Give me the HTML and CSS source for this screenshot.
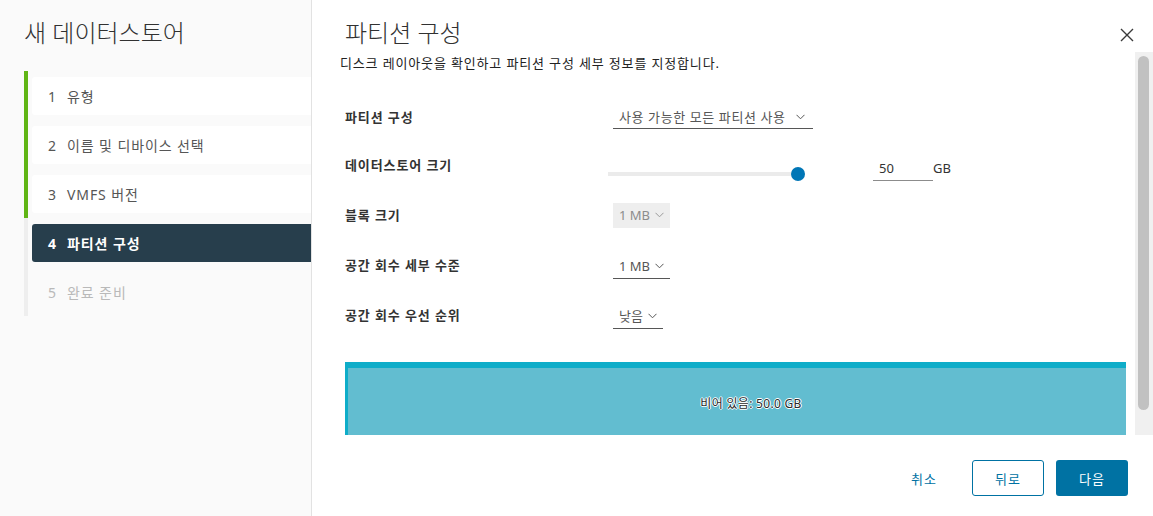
FILE: index.html
```html
<!DOCTYPE html>
<html lang="ko">
<head>
    <meta charset="UTF-8">
    <meta name="viewport" content="width=device-width, initial-scale=1.0">
    <title>새 데이터스토어</title>
    <link rel="stylesheet" href="styles.css">
</head>
<body>
    <aside class="sidebar">
        <h2 class="wizard-title">새 데이터스토어</h2>
        <ul class="steps">
            <li class="step done"><div class="step-box"><span class="num">1</span>유형</div></li>
            <li class="step done"><div class="step-box"><span class="num">2</span>이름 및 디바이스 선택</div></li>
            <li class="step done"><div class="step-box"><span class="num">3</span>VMFS 버전</div></li>
            <li class="step active"><div class="step-box"><span class="num">4</span>파티션 구성</div></li>
            <li class="step todo"><div class="step-box"><span class="num">5</span>완료 준비</div></li>
        </ul>
    </aside>

    <main class="main">
        <header class="header">
            <h1 class="page-title">파티션 구성</h1>
            <button class="close" aria-label="닫기">
                <svg width="14" height="14" viewBox="0 0 14 14"><path d="M1 1 L13 13 M13 1 L1 13" stroke="#3a3a3a" stroke-width="1.4" fill="none"/></svg>
            </button>
        </header>

        <div class="body">
            <div class="content">
                <p class="desc">디스크 레이아웃을 확인하고 파티션 구성 세부 정보를 지정합니다.</p>

                <div class="form">
                    <div class="form-row first">
                        <label>파티션 구성</label>
                        <div class="control">
                            <div class="select wide">사용 가능한 모든 파티션 사용<svg class="chev" width="9" height="6" viewBox="0 0 9 6"><path d="M0.5 0.8 L4.5 4.8 L8.5 0.8" stroke="#565656" fill="none"/></svg></div>
                        </div>
                    </div>
                    <div class="form-row">
                        <label>데이터스토어 크기</label>
                        <div class="control">
                            <div class="slider"><div class="track"></div><div class="thumb"></div></div>
                            <div class="size-input">50</div>
                            <span class="unit">GB</span>
                        </div>
                    </div>
                    <div class="form-row">
                        <label>블록 크기</label>
                        <div class="control">
                            <div class="select disabled">1 MB<svg class="chev" width="9" height="6" viewBox="0 0 9 6"><path d="M0.5 0.8 L4.5 4.8 L8.5 0.8" stroke="#9a9a9a" fill="none"/></svg></div>
                        </div>
                    </div>
                    <div class="form-row">
                        <label>공간 회수 세부 수준</label>
                        <div class="control">
                            <div class="select">1 MB<svg class="chev" width="9" height="6" viewBox="0 0 9 6"><path d="M0.5 0.8 L4.5 4.8 L8.5 0.8" stroke="#565656" fill="none"/></svg></div>
                        </div>
                    </div>
                    <div class="form-row">
                        <label>공간 회수 우선 순위</label>
                        <div class="control">
                            <div class="select">낮음<svg class="chev" width="9" height="6" viewBox="0 0 9 6"><path d="M0.5 0.8 L4.5 4.8 L8.5 0.8" stroke="#565656" fill="none"/></svg></div>
                        </div>
                    </div>
                </div>

                <div class="partition">
                    <span class="partition-label">비어 있음: 50.0 GB</span>
                </div>
            </div>
            <div class="scrollbar"><div class="scroll-thumb"></div></div>
        </div>

        <footer class="footer">
            <button class="btn btn-link">취소</button>
            <button class="btn btn-outline">뒤로</button>
            <button class="btn btn-primary">다음</button>
        </footer>
    </main>
</body>
</html>
```

FILE: styles.css
```css
/* Pagina */
body {
    margin: 0;
    height: 516px;
    display: flex;
    overflow: hidden;
    font-family: 'Noto Sans', 'Noto Sans CJK KR', sans-serif;
    color: #333;
    background: white;
}

/* Barra laterale */
.sidebar {
    width: 287px;
    padding-left: 24px;
    background: #fafafa;
    border-right: 1px solid #e2e2e2;
}

.wizard-title {
    margin: 17px 0 0;
    font-size: 24px;
    line-height: 32px;
    font-weight: 300;
    color: #313131;
}

.steps {
    list-style: none;
    margin: 22px 0 0;
    padding: 0;
}

.step {
    border-left: 4px solid #eeeeee;
    padding: 6px 0 5px 4px;
}

.step.done {
    border-left-color: #60b515;
}

.step-box {
    height: 38px;
    display: flex;
    align-items: center;
    padding-left: 16px;
    font-size: 14px;
    letter-spacing: 0.9px;
    color: #565656;
    border-radius: 3px 0 0 3px;
}

.step-box .num {
    width: 19px;
}

.step.done .step-box {
    background: white;
}

.step.active .step-box {
    background: #273e4c;
    color: white;
    font-weight: 700;
}

.step.todo .step-box {
    color: #b9b9b9;
}

/* Pannello principale */
.main {
    flex: 1;
    display: flex;
    flex-direction: column;
}

.header {
    height: 52px;
    display: flex;
    justify-content: space-between;
    align-items: flex-start;
}

.page-title {
    margin: 17px 0 0 33px;
    font-size: 24px;
    line-height: 32px;
    font-weight: 300;
    color: #313131;
}

.close {
    margin: 28px 19px 0 0;
    padding: 0;
    border: none;
    background: none;
    width: 14px;
    height: 14px;
    line-height: 0;
}

.body {
    height: 383px;
    display: flex;
    overflow: hidden;
}

.content {
    flex: 1;
    padding: 2px 9px 0 33px;
}

.desc {
    margin: 0 0 0 -5px;
    font-size: 13px;
    line-height: 18px;
    letter-spacing: 0.85px;
    color: #222;
}

/* Form */
.form {
    margin-top: 17px;
}

.form-row {
    display: flex;
    align-items: center;
    height: 50px;
}

.form-row label {
    width: 268px;
    font-size: 13px;
    font-weight: 700;
    letter-spacing: 0.9px;
    color: #333;
}

.form-row.first label {
    margin-top: 4px;
}

.control {
    display: flex;
    align-items: center;
}

.select {
    height: 24px;
    display: flex;
    align-items: center;
    margin-top: 4px;
    padding: 0 6px 0 6px;
    border-bottom: 1px solid #565656;
    font-size: 13px;
    white-space: nowrap;
    color: #565656;
}

.select.wide {
    box-sizing: border-box;
    width: 200px;
    justify-content: space-between;
    margin-top: 6px;
    padding-right: 8px;
    letter-spacing: 0.6px;
}

.select.disabled {
    background: #eeeeee;
    border-bottom-color: #eeeeee;
    color: #8c8c8c;
    margin-top: 2px;
}

.chev {
    margin-left: 5px;
    flex-shrink: 0;
}

.slider {
    position: relative;
    width: 197px;
    height: 14px;
    margin: 20px 0 0 -5px;
}

.track {
    position: absolute;
    left: 0;
    right: 7px;
    top: 5px;
    height: 4px;
    background: #ebebeb;
}

.thumb {
    position: absolute;
    right: 0;
    top: 0;
    width: 14px;
    height: 14px;
    border-radius: 50%;
    background: #0076b6;
}

.size-input {
    width: 54px;
    height: 24px;
    margin: 8px 0 0 68px;
    padding-left: 6px;
    border-bottom: 1px solid #8c8c8c;
    font-size: 13px;
    line-height: 24px;
    color: #333;
}

.unit {
    margin-top: 8px;
    font-size: 13px;
    color: #333;
}

/* Barra partizione */
.partition {
    margin-top: 23px;
    height: 70px;
    padding-left: 28px;
    background: #62bdd0;
    border-top: 6px solid #0eadc9;
    border-left: 3px solid #0eadc9;
    display: flex;
    justify-content: center;
    align-items: center;
}

.partition-label {
    font-size: 12px;
    letter-spacing: 0.3px;
    color: #2a2a2a;
    text-shadow: 1px 0 0 #fff, -1px 0 0 #fff, 0 1px 0 #fff, 0 -1px 0 #fff;
}

/* Barra di scorrimento */
.scrollbar {
    width: 18px;
    background: #f0f0f0;
}

.scroll-thumb {
    margin: 4px 0 0 3px;
    width: 11px;
    height: 354px;
    border-radius: 6px;
    background: #c1c1c1;
}

/* Pulsanti */
.footer {
    flex: 1;
    display: flex;
    justify-content: flex-end;
    align-items: flex-start;
    gap: 12px;
    padding: 25px 25px 0 0;
}

.btn {
    width: 72px;
    height: 36px;
    border-radius: 3px;
    font-family: inherit;
    font-size: 13px;
    letter-spacing: 1px;
    cursor: pointer;
}

.btn-link {
    border: none;
    background: none;
    color: #0072a3;
}

.btn-outline {
    border: 1px solid #0072a3;
    background: white;
    color: #0072a3;
}

.btn-primary {
    border: none;
    background: #0072a3;
    color: white;
}
```
